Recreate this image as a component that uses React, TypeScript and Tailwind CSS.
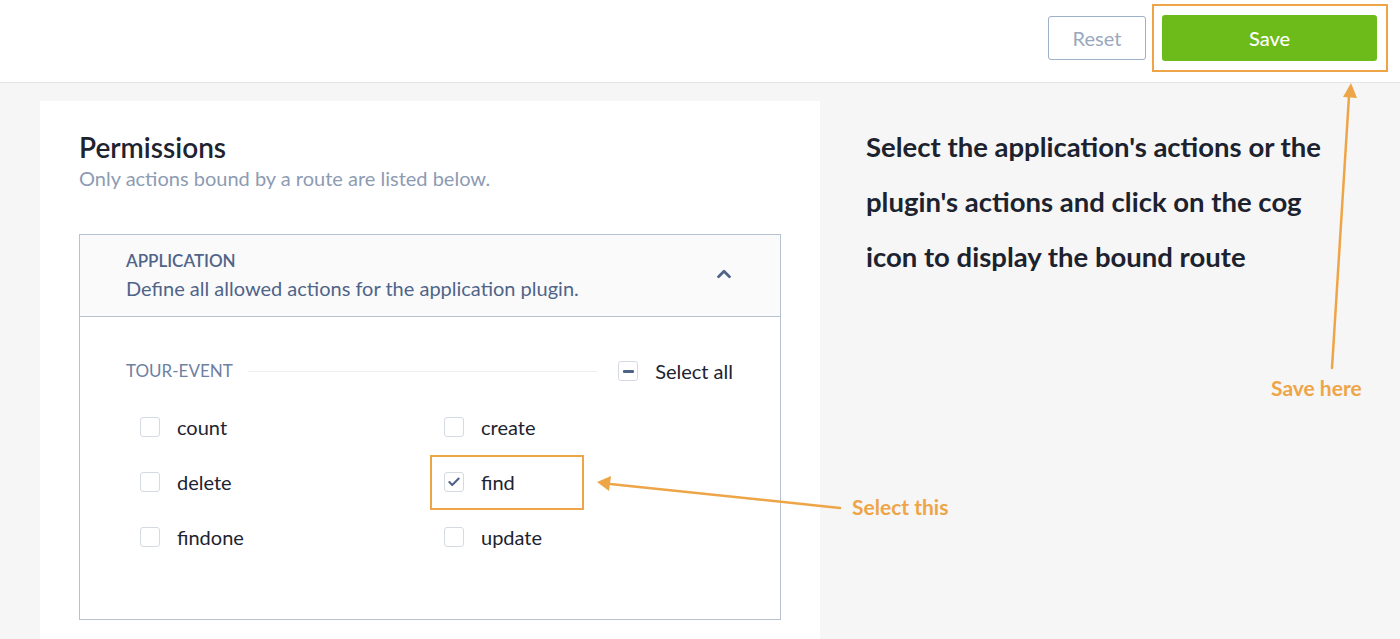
import { Check, ChevronUp } from 'lucide-react'

const actions = [
  { name: 'count', checked: false },
  { name: 'create', checked: false },
  { name: 'delete', checked: false },
  { name: 'find', checked: true, highlight: true },
  { name: 'findone', checked: false },
  { name: 'update', checked: false },
]

function Checkbox({ checked }: { checked: boolean }) {
  return (
    <span className="flex h-[20px] w-[20px] shrink-0 items-center justify-center rounded-[3px] border border-[#d5dae2] bg-white">
      {checked && <Check size={14} strokeWidth={3.5} className="text-[#4e6386]" />}
    </span>
  )
}

function Annotations() {
  return (
    <svg className="pointer-events-none absolute left-0 top-0" width={1400} height={639}>
      <g stroke="#eea548" strokeWidth={2.5} fill="#eea548" strokeLinecap="round">
        <line x1={1332} y1={368} x2={1349} y2={96} />
        <polygon points="1351,83 1343,97 1357,98" stroke="none" />
        <line x1={840} y1={508} x2={610} y2={484} />
        <polygon points="597,482 611,476 609,491" stroke="none" />
      </g>
    </svg>
  )
}

export default function App() {
  return (
    <div className="relative h-[639px] w-[1400px] overflow-hidden bg-[#f6f6f6] font-['Lato','Noto_Sans',sans-serif] text-[#1d2330]">
      <header className="flex h-[83px] items-start justify-end border-b border-[#e3e4e7] bg-white pr-[12px] pt-[4px]">
        <button
          type="button"
          className="mt-[12px] h-[44px] w-[98px] rounded-[3px] border border-[#9eb0c8] bg-white text-[20px] text-[#9aa8bd]"
        >
          Reset
        </button>
        <div className="ml-[6px] border-2 border-[#eea548] pb-[9px] pl-[8px] pr-[9px] pt-[9px]">
          <button
            type="button"
            className="h-[46px] w-[215px] rounded-[3px] bg-[#6dbb1a] text-[20px] font-medium text-white"
          >
            Save
          </button>
        </div>
      </header>

      <div className="flex pt-[18px]">
        <section className="ml-[40px] h-[560px] w-[780px] bg-white px-[39px] pt-[30px]">
          <h1 className="text-[28px] font-semibold leading-[32px] text-[#1e2330]">Permissions</h1>
          <p className="mt-[3px] text-[20px] leading-[24px] text-[#8d9bb3]">
            Only actions bound by a route are listed below.
          </p>

          <div className="mt-[44px] border border-[#b7c2d1]">
            <div className="flex items-center justify-between border-b border-[#b7c2d1] bg-[#fafafb] pb-[16px] pl-[46px] pr-[45px] pt-[16px]">
              <div>
                <div className="text-[17px] font-semibold leading-[20px] text-[#4f6488]">APPLICATION</div>
                <div className="mt-[5px] text-[20px] leading-[24px] text-[#4f6488]">
                  Define all allowed actions for the application plugin.
                </div>
              </div>
              <ChevronUp size={22} strokeWidth={3} className="mt-[-4px] text-[#4f6488]" />
            </div>

            <div className="pb-[55px] pl-[46px] pr-[47px] pt-[42px]">
              <div className="flex h-[24px] items-center">
                <span className="text-[17px] text-[#6f80a0]">TOUR-EVENT</span>
                <span className="ml-[15px] mr-[21px] h-px flex-1 bg-[#eceef1]" />
                <span className="flex h-[20px] w-[20px] items-center justify-center rounded-[3px] border border-[#d5dae2]">
                  <span className="h-[3px] w-[11px] rounded-[1px] bg-[#4e6386]" />
                </span>
                <span className="ml-[17px] text-[20px]">Select all</span>
              </div>

              <div className="mt-[16px] grid grid-cols-[304px_1fr] pl-[14px]">
                {actions.map((a) => (
                  <div key={a.name} className="relative flex h-[55px] items-center">
                    {a.highlight && (
                      <span className="absolute left-[-14px] top-[1px] h-[55px] w-[154px] border-2 border-[#eea548]" />
                    )}
                    <Checkbox checked={a.checked} />
                    <span className="ml-[17px] text-[20px] leading-[24px]">{a.name}</span>
                  </div>
                ))}
              </div>
            </div>
          </div>
        </section>

        <aside className="ml-[46px] w-[478px] pt-[18px] text-[27.5px] font-bold leading-[55px] text-[#1c222e]">
          Select the application's actions or the plugin's actions and click on the cog icon to display the bound route
        </aside>
      </div>

      <Annotations />
      <span className="absolute left-[852px] top-[494px] text-[21px] font-bold leading-[26px] text-[#eea548]">
        Select this
      </span>
      <span className="absolute left-[1271px] top-[375px] text-[21px] font-bold leading-[26px] text-[#eea548]">
        Save here
      </span>
    </div>
  )
}
